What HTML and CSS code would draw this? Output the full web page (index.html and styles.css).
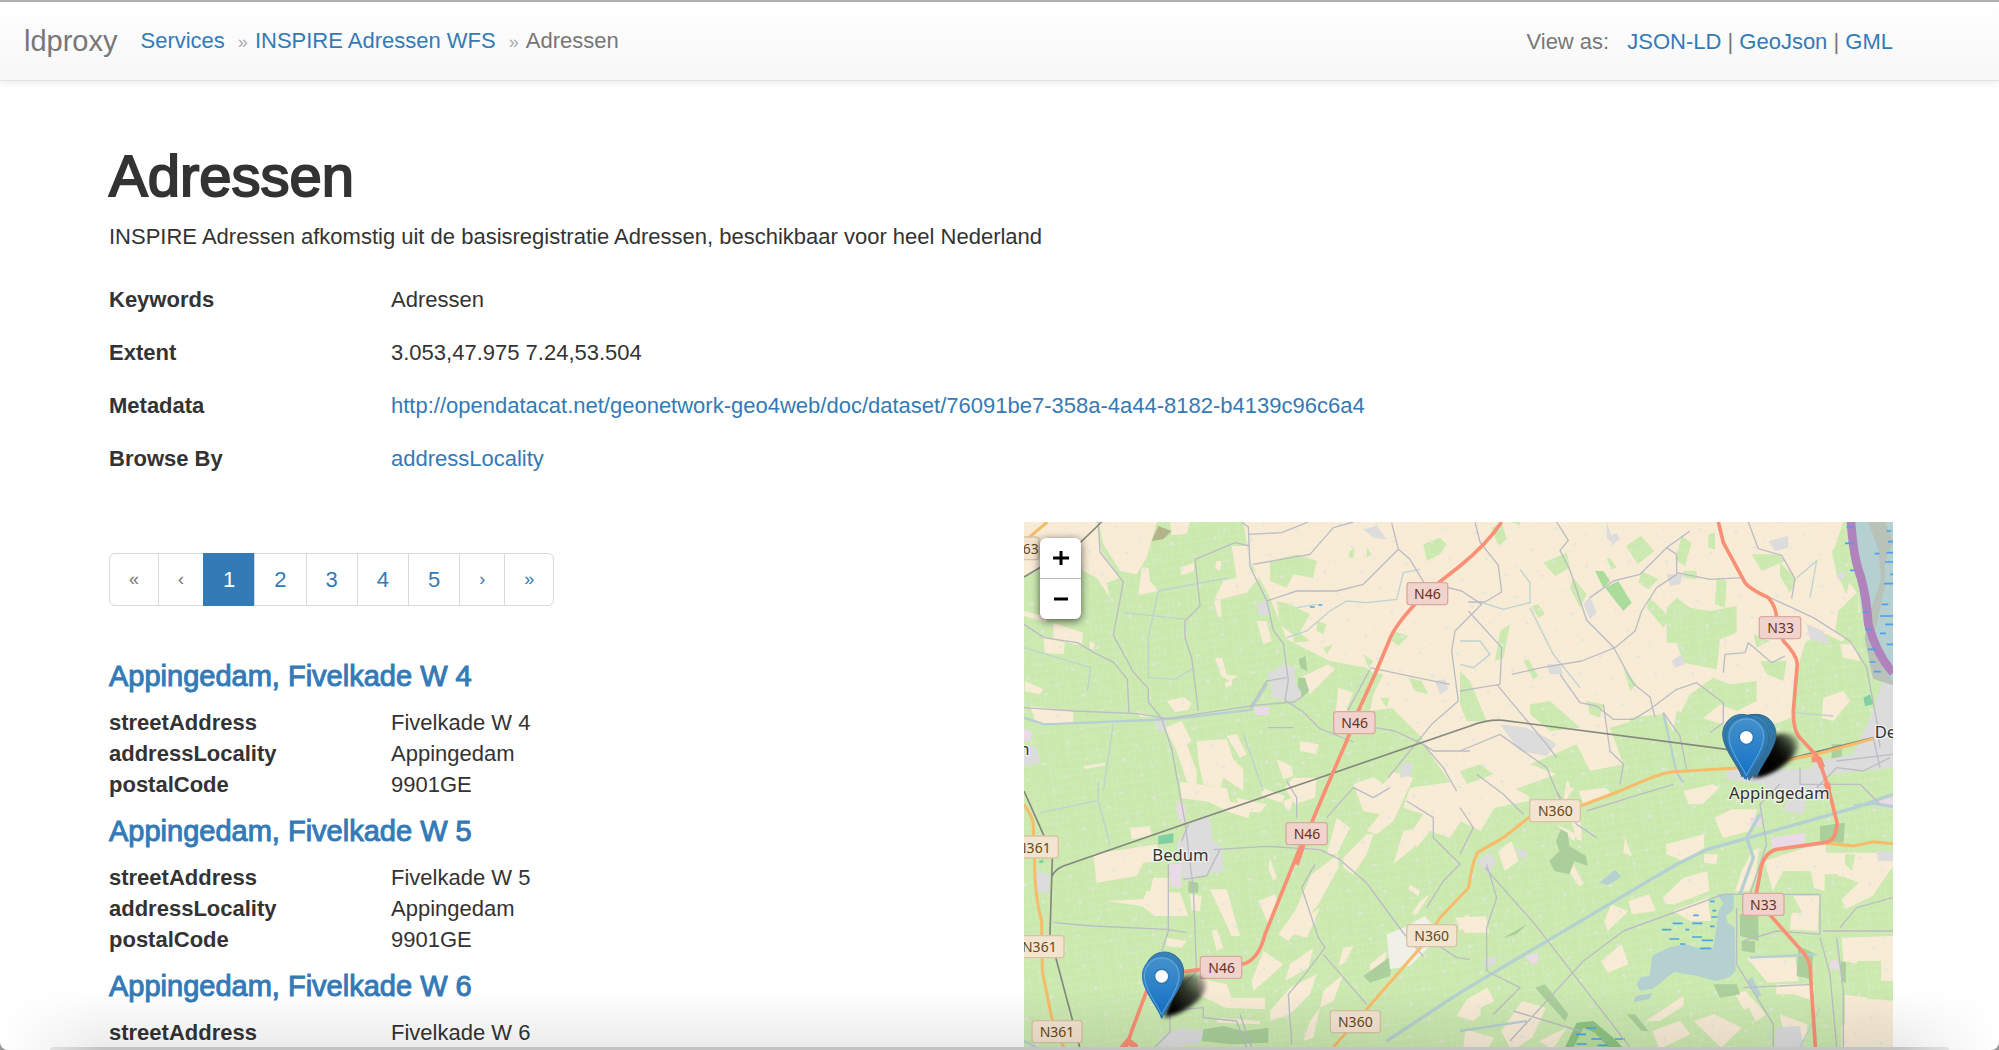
FILE: index.html
```html
<!DOCTYPE html>
<html lang="nl">
<head>
<meta charset="utf-8">
<title>Adressen - ldproxy</title>
<meta name="viewport" content="width=device-width, initial-scale=1">
<link rel="stylesheet" href="styles.css">
</head>
<body>
<div class="page">
<header class="navbar">
  <a class="brand" href="#">ldproxy</a>
  <nav aria-label="Breadcrumb">
    <ol class="breadcrumb">
      <li><a href="#">Services</a></li>
      <li><a href="#">INSPIRE Adressen WFS</a></li>
      <li>Adressen</li>
    </ol>
  </nav>
  <div class="formats"><span class="formats-label">View as:</span><a href="#">JSON-LD</a> | <a href="#">GeoJson</a> | <a href="#">GML</a></div>
</header>
<main class="container">
  <h1>Adressen</h1>
  <p class="lead">INSPIRE Adressen afkomstig uit de basisregistratie Adressen, beschikbaar voor heel Nederland</p>
  <dl class="meta">
    <dt>Keywords</dt><dd>Adressen</dd>
    <dt>Extent</dt><dd>3.053,47.975 7.24,53.504</dd>
    <dt>Metadata</dt><dd><a href="#">http://opendatacat.net/geonetwork-geo4web/doc/dataset/76091be7-358a-4a44-8182-b4139c96c6a4</a></dd>
    <dt>Browse By</dt><dd><a href="#">addressLocality</a></dd>
  </dl>
  <div class="columns">
    <section class="results">
      <ul class="pagination">
        <li><span class="arrow">«</span></li>
        <li><span class="arrow">‹</span></li>
        <li><a class="active" href="#" aria-current="page">1</a></li>
        <li><a href="#">2</a></li>
        <li><a href="#">3</a></li>
        <li><a href="#">4</a></li>
        <li><a href="#">5</a></li>
        <li><a class="arrow" href="#">›</a></li>
        <li><a class="arrow" href="#">»</a></li>
      </ul>
      <article class="item">
        <h3><a href="#">Appingedam, Fivelkade W 4</a></h3>
        <dl><dt>streetAddress</dt><dd>Fivelkade W 4</dd><dt>addressLocality</dt><dd>Appingedam</dd><dt>postalCode</dt><dd>9901GE</dd></dl>
      </article>
      <article class="item">
        <h3><a href="#">Appingedam, Fivelkade W 5</a></h3>
        <dl><dt>streetAddress</dt><dd>Fivelkade W 5</dd><dt>addressLocality</dt><dd>Appingedam</dd><dt>postalCode</dt><dd>9901GE</dd></dl>
      </article>
      <article class="item">
        <h3><a href="#">Appingedam, Fivelkade W 6</a></h3>
        <dl><dt>streetAddress</dt><dd>Fivelkade W 6</dd></dl>
      </article>
    </section>
    <section class="map" aria-label="Map">
      <svg class="map-canvas" viewBox="42 33 2607 1587" preserveAspectRatio="xMinYMin slice" role="img" aria-label="Map of Appingedam and Bedum">
        <defs>
          <pattern id="fields" width="60" height="46" patternUnits="userSpaceOnUse" patternTransform="rotate(-8)">
            <path d="M0 8H60M12 0V46M0 30H60M42 8V46M27 0V30" fill="none" stroke="#dcefc9" stroke-width="1.5"/>
          </pattern>
          <pattern id="specks" width="173" height="149" patternUnits="userSpaceOnUse" patternTransform="rotate(17)">
            <path d="M20 15l8-3 3 7-8 3zM90 42l6 2-2 8-7-2zM140 100l9-4 3 6-9 4zM45 112l7 1-1 6-7-1zM112 8l5 3-3 5-5-3z" fill="#e3e6dc"/>
          </pattern>
          <linearGradient id="pin-fill" x1="0" y1="0" x2="0" y2="1">
            <stop offset="0" stop-color="#4592cb"/><stop offset="1" stop-color="#126fc6"/>
          </linearGradient>
          <linearGradient id="pin-edge" x1="0" y1="0" x2="0" y2="1">
            <stop offset="0" stop-color="#3883b7"/><stop offset="1" stop-color="#2e6c97"/>
          </linearGradient>
          <linearGradient id="shade" x1="0" y1="1" x2="1" y2="0">
            <stop offset=".2" stop-color="#000"/><stop offset=".6" stop-color="#000" stop-opacity=".75"/><stop offset="1" stop-color="#000" stop-opacity=".15"/>
          </linearGradient>
          <filter id="soft" x="-50%" y="-50%" width="200%" height="200%"><feGaussianBlur stdDeviation="7"/></filter>
          <g id="pin-back"><path d="M0 0C-8-30-58-85-58-128A58 60 0 0 1 58-128C58-85 8-30 0 0Z" fill="url(#pin-edge)" stroke="#2e6c97" stroke-width="3"/></g>
          <g id="pin">
            <path d="M0 0C-8-30-58-85-58-128A58 60 0 0 1 58-128C58-85 8-30 0 0Z" fill="url(#pin-fill)" stroke="#2e7ab8" stroke-width="3"/>
            <path d="M0-12C-10-38-52-88-52-128A52 54 0 0 1 52-128C52-88 10-38 0-12Z" fill="none" stroke="#69a9d9" stroke-width="3"/>
            <circle cy="-127" r="21" fill="#fff" stroke="#2d75ad" stroke-width="4"/>
          </g>
          <path id="pin-shadow" d="M0 0L35-110Q75-145 115-122Q140-90 100-50Q60-12 0 0Z" fill="url(#shade)" filter="url(#soft)"/>
        </defs>

        <rect x="42" y="33" width="2607" height="1587" fill="#cbe9af"/>

        <!-- farmland -->
        <g fill="#faebd7">
          <path d="M700 33H2500L2470 120 2490 180 2545 250 2550 300 2500 390 2385 395 2350 520 2345 620 2260 650 2240 700 2140 640 2000 600 1985 690 1900 620 1800 650 1840 760 1740 780 1700 700 1560 760 1640 790 1500 840 1420 900 1340 840 1240 700 1170 690 1120 650 1150 590 1080 600 1100 500 1070 470 960 450 830 385 780 260 720 150Z"/>
          <path d="M42 33H260L275 120 330 200 290 215 300 260 260 200 220 180 200 120 42 200ZM265 33H440L410 140 380 190 330 180 280 100ZM480 33l60 0-10 35-45 5zM395 170l20 0 5 40 25 30-60 12zM510 170l42-15 0 25-38 12zM665 105l45 0 15 70 25 20-40 50-60 15-40 10 30-60 40-10zM620 150l15 0-5 30-15-10zM610 265l15 55 10-5-5-50zM740 330l30 0 15 60-25 10zM42 300l60 15 10 20-70-20zM130 335l90 30-5 40-85-22zM100 380l65 15-5 35-55-5zM45 510l55 25-10 15-45-10zM60 585l130 15 0 40-110 0zM240 390l15 8-5 20-12-8zM615 440l22 0 12 50 35 5-25 15-25-15zM645 515l20-8 2 15-20 8zM470 570l50-12 25 18-10 20-40 8zM380 602l55 15-45 0z"/>
          <path d="M465 650l50-20 30 60-15 10 30 80 0 60-30-30-30-90zM560 690l90-5 20 60 30 30 0 65-60-40-10 30-50-10-15-70zM650 675l30-5 30 60-20 10zM870 690l55 10-5 30-50-10zM800 745l45 20 5 30-30 10zM985 530l45 15-30 90-25-10zM870 500l85-40 20 15-75 75zM850 800l70 0-5 60-60 20-30-50zM220 765l65-10 0 8-60 12z"/>
          <path d="M510 812l140 20 10 40 65 10-10 40-60-20-60-30-80-10zM680 860l90 20-20 25-60-5zM755 830l70 25-10 20-60-20zM360 950l60-5 5 30-60 10zM250 1030l190-30 20 50-60 5-20 40-120 20zM290 1170l110-5 10-25 100 5 25 70-100 0-40-30zM430 1100l50 0-5 60-55-20zM540 1150l35 5-5 45-25-2zM600 1135l50 0 40 140-25 0zM470 1280l60 10-15 20-45-5zM605 1260l15-5 20 55-20 10zM780 1040l20 60-10 10-15-40zM745 1170l50-20 10 30-30 60zM855 1200l50-110 80-60 0 40-60 110-90 110-30-20zM1000 1040l70-70 20 0-20 60-40 60-30-20zM820 870l30-10-10 40-15-10zM1030 820l110-40 70 20-60 130-50 40-30-10 40-50-50-10zM980 920l40 30-40 80-30 0z"/>
          <path d="M1200 830l150-20 30 80-60 90-60-20-40 50-20-40 40-60-60-20zM1180 960l60-10-30 60-60 50zM1200 1120l30 20-5 15-30-20zM1230 1170l30-20-40 60-15 0zM1340 1230l35-20 5 20-30 30zM840 1360l70-50-15 60-70 40zM760 1320l60 40-90 80-5-30zM780 1500l60-70 80-40-20 60-60 60-60 20zM560 1400l90 20 15 40 100 0 0 35-120-5-80-40zM1000 1310l30-5-25 50-20 10zM1080 1360l50-40-10 50-40 20zM900 1530l30-40-20 90-30 10zM620 1520l130 10 0 10-130-5zM850 1270l20-40 60-40-40 90zM940 1440l60-50-30 80-40 20z"/>
        </g>
        <g fill="#faebd7" transform="translate(1350 810) scale(1.0313 1)">
          <path d="M0 0H120L200 45 200 60 100 80 60 150 0 120ZM310 0l30 10-40 60zM320 110l30 0 5 70-15-5zM110 210l40-30 20 60-40 30zM280 130l60 30-10 20zM345 30l80-10 15 20-80 30zM650 30l85-20 20 10-50 50-40 0zM480 170l20 55-25-10zM600 190l110-30 0 40-60 40-50-20zM740 110l50-25 75 0-20 65-80 20zM710 220l40 0-5 30-35-5zM590 350l60-60 70-20 5 60-100 40-25 0zM720 350l10 70-60 0-50-30zM490 360l60-20 20 50-70 10zM800 330l20-60 30-60 20-10-10 80-20 50zM885 240l180-60-5 150-30-10-10-50-80 0-30 60zM1060 215l200 0 0 40-60 90-80 40-10-30 50-50-50-20-60 0zM970 345l75 0-5 105-80-5 5-50 30 0zM835 530l140 0 10 70-90 5zM920 610l110 0 0 50-60-20-50 0zM1110 470l150-5 0 160-60 0-10-70-75-15zM1110 640l150 20 0 145-150 0zM410 540l60-50 20 60-60 25zM540 720l110-75 0 30-70 45zM560 750l80-30 30 40-90 45zM680 720l60-20 80 40-60 60zM800 640l30-10 60 70-40 30zM180 660l70 20-40 90-60 40-30-60zM20 655l60-35 20 40-60 60-50-15zM15 745l85 25-20 35-70 0zM330 250l30 60-15 5-25-40zM-15 410l90-5 10 50-70 0zM230 780l80-40-40 65zM440 370l50 20-60 60-10-30zM930 700l80 30 0 40-60 30z"/>
        </g>

        <!-- meadows on top of farmland -->
        <g fill="#cbe9af">
          <path d="M780 150l80-20 60 20-10 50-60-10-20 40-50-20zM800 270l40 10 60 30-40 70-50-40zM850 350l50 40-50 5zM1020 120l15-10-5 30-15 0zM1070 110l15 20-15 10zM1240 100l50-20 20 20-20 30-40 20zM1150 360l45 15-30 30-25-20zM1060 430l30 20-15 20zM920 330l30 10-10 30-20-10zM940 410l30-10-20 30zM1060 480l60 10-40 80-30 80-40-60zM1090 600l60-5 90 90-60 40-90-10zM1060 690l80 20 20 60-40 50-80-60zM1110 560l30 0-10 30zM1195 500l40 10 20 40-40-10z"/>
          <path d="M1445 50l30-15 15 50-25 20zM1500 33l30 0 0 10zM1600 155l70-30 10 45-45 25zM1848 105l45-30 40 45-50 40zM2015 75l30 20-20 70-30-20zM2095 70l20-5 0 50-20-5zM1790 145l10-5 20 30-15 5zM1895 180l50 25-30 30-30-20zM1690 200l40 50-20 40-30-60zM1920 260l60 60-20 30-50-60zM1970 290l30-30 40 30 60 10 80-15 0 80-50 20-10 90-100-20-20-60-30 0zM2225 130l80 0 20 20-70 30zM2310 155l50 50-20 40-30-50zM2465 120l35-30 20 110-10 50-30-60zM2485 300l60-60 0 110-20 40-50-30zM2120 200l30 10-5 80-30-10zM2020 180l40 0 0 25-40-5zM1470 360l30-20-20 100-25 10zM1540 450l15-5 30 50-15 10zM1565 285l20-5 20 30-20 10zM1560 580l60-10 90 80-90 10-60-50zM2110 500l50 20 80-10 0 60-60 30-50-20-60 50-60-20 30-60zM2250 450l80 0-10 60-50-20zM1730 570l50 10-10 40-30-10zM1840 470l40 50-20 20zM2230 370l50 20-40 20z"/>
          <path d="M1350 480l30 30 50 120-60 0-20-50zM1860 620l100-10 40 70-50 60-100 0zM1980 720l80-20 70 30-30 40-120-10zM1660 720l60 30 50 80-90 0zM1350 780l60-20 40 30-80 30zM2390 390l60-20 60 30 40 60 50 100-30 100-20 90-90 30-90-80-10-60 30-140z"/>
        </g>
        <path d="M2440 560l60-20 20 30-50 60-35-10zM2490 400l40 0 20 50-50-10z" fill="#faebd7"/>
        <g fill="#cbe9af" transform="translate(1350 810) scale(1.0313 1)">
          <path d="M945 280l75 0 0 50-75 10zM1060 280l40 0 0 70-30-10zM1155 540l70 0 0 60-70 0zM1185 600l75 0 0 55-75 0zM1090 620l30 10 0 100-30 10zM800 700l40-20 20 40-40 25zM60 680l40-20 10 30-50 40zM1120 220l30 0-10 50-20-20zM650 700l30-10 0 30z"/>
        </g>
        <rect x="42" y="33" width="2607" height="1587" fill="url(#fields)" opacity=".6"/>
        <rect x="42" y="33" width="2607" height="1587" fill="url(#specks)"/>

        <!-- woods -->
        <g fill="#aacf9b">
          <path d="M865 445l22-10 5 45-20-10zM865 500l20 0 12 40-20 18-15-20z"/>
          <path d="M1755 180l25 0 20 30-20 20zM1785 230l40-20 40 65-25 25z" fill="#aadd9c"/>
          <path d="M425 90l20-45 40 15-25 25z" fill="#b4b48c"/>
          <path d="M1653 955l20 10 5 40 50 30 5 30-40-15-15 40-45-10-15-30 30-30-10-30zM2190 1210h55l0 80-55-15zM2430 945l75-10-5 60-70-5zM2365 1305l45 20-5 80-45-10zM1575 1430l30-10 70 90-10 20zM2493 1350l15 5 0 60-15-5zM580 1555l60-10 60 15 75-10 0 45-110 5-90-10zM1060 1395l70-50 20-10-10 60-60 20zM2465 700l30 0 0 40-30 5zM535 1110l30 5 0 30-30 0zM1850 1510l25 0 40 50-20 0zM2110 1420l70 0 10 30-60 10zM1480 1280l70-40-30 30zM2195 1290l40 0 0 35-40-5z"/>
          <path d="M1660 1620l40-85 50-5 60 50 40 40z" fill="#8fc584"/><path d="M1685 1620l35-70 35 15 50 55z" fill="#b9dfa0"/>
          <path d="M445 975l45-8 0 28-45 5zM88 1050l12-5 0 10-12 2zM2560 560l20-10 10 30-25 5z" fill="#7fcfa3"/>
        </g>

        <!-- built-up land -->
        <g fill="#dcdcdc">
          <path d="M770 490l50-30 35 10 0 45 20 30-10 25-40-5-40-5 0-40zM740 275l30-5 10 40-35 5zM430 620l35-5 5 40-20 10zM42 705l35 0 15 50-50 10zM1275 510l30-5 10 30-25 15zM1175 755l35 0-10 40-30 5zM1060 55l40-10 30 40-40-5zM500 1000l40-60 25-20 35 0 10 70 25 20 5 70-50 10-60 20-20-40zM80 1080l40 10-5 60-35-10zM450 1580l60-30 70 10-10 40-120 10zM1470 640l80 10 60 30 30 20-30 35-80-15zM1720 280l20-25 20 50-20 20zM1970 190l50 0-10 30-30 5zM1985 450l30-20 10 30-30 10zM2275 90l60-15 0 35-40 10zM2390 340l50 20 20 40-60-15zM1610 460l40 0 10 30-40 0zM2480 190l25-10 0 25-20 0zM1790 35l15 40-15 5zM1790 80l30-15 10 20-20 15zM2580 620l40-110 29-10v270l-200 20-20 50-80-30 80-60 100-20zM2150 775l300 0 10 90-140-5-60-40-110-15zM2330 870l60-10-10 50-60-10zM2295 1550l75-5 10 65-85 0zM1400 1050l40-25 20 30-30 30zM1420 1345l40-10-5 30-30 5zM2600 1020l49 0 0 30-45 0zM1520 1010l30 10 0 30-30-20z"/>
          <path d="M1130 1270l50-20 65-35 25 30 10 40-80 80-60 10z" fill="#f0efe8"/>
          <path d="M735 588l42 0 0 25-42 0zM478 1060l36 0 0 70-30 0zM500 870l25 10 0 60-20-20zM42 655l25 5-5 30-20 0zM2285 980l100-15 0 40-100 15zM2220 920l35-5 0 30-30 0zM1545 1335l40-10 0 30-20 5zM2590 870l59-10 0 35-59-10zM2460 1350l20-5 10 30-30 0z" fill="#ead9e6"/>
        </g>

        <!-- water -->
        <path d="M2510 33H2649V520L2610 500 2560 330 2540 180Z" fill="#b5d0d0"/>
        <path d="M2575 33h50l24 60-25 60 0 80-20 90-20 80 30 60 35 50v10l-60-20-25-120 10-60 40-120-10-90z" fill="#b8c2b8"/>
        <path d="M2523 33Q2530 140 2553 200 2570 260 2575 340 2600 430 2649 486" fill="none" stroke="#b083bd" stroke-width="26"/>
        <path d="M2510 49h20M2505 97h26M2520 178h14M2558 303h18M2565 355h16M2574 415h24M2578 453h18M2592 482h20M2594 128h14M2630 125h19M2622 218h27M2615 280h20M2610 315h39M2610 367h18M2630 400h19M2634 92h15M2625 340h24M2630 60h14M2625 153h24M2640 190h9" stroke="#4a9ff0" stroke-width="5"/>
        <g fill="#b5d0d0" transform="translate(1350 810) scale(1.0313 1)">
          <path d="M748 340l48-5 0 50-22 20 5 20 20 15 3 130-20 20-40 10-50-15-70-12-60 50-38 6-10-20 12-20 25-5 8-60 50-25 45-10 50 15 32-2 10-60 5-50 15-25zM405 305l45-38 20 20-40 25zM510 645l50-8-10 18-45 8zM835 600l15-12 27 55-12 8z"/>
        </g>
        <path d="M1130 1590L1350 1445 1628 1280 2000 1060 2093 1015 2536 890 2649 850M2250 910l-40 70 20 60-40 110M2530 885l60-8 59 10" fill="none" stroke="#b5d0d0" stroke-width="10"/>
        <path d="M42 620l60 20 130-5 190-8 80-5 220-25 50-80M42 1590l40 20M1960 605l40 180 20 30M2420 1330l-200 10M1350 1560l200-30" fill="none" stroke="#b5cfd2" stroke-width="7"/>
        <path d="M2100 1171h14M2107 1199h12M2104 1218h18M2100 1246h14M2050 1213h16M1988 1237h30M2047 1237h30M1956 1256h28M2026 1256h12M2046 1278h30M2075 1288h34M1978 1284h30M2010 1299h16M2070 1312h34M1728 1551h30M1698 1570h30M1744 1584h30M1700 1599h30M1763 1603h30M1815 1584h30M900 288h14M925 282h12" stroke="#4aa5e8" stroke-width="5"/>

        <!-- streams -->
        <g fill="none" stroke="#bdd3cf" stroke-width="4">
          <path d="M445 240l-30 140 0 120M340 305l190 20M445 240l210-40M860 290l60-10M960 300l-70 60-60 20M1530 175l30 40 0 60-80 20-80-25M1560 290l70 140 80 100M300 1000l-35-130 0-60M42 410l200 60-10 70M310 640l-30 200M415 500l80 5 50-30M700 670l60 170M90 905l170-35M1350 390l60 0 30 40-50 40-40-10M2360 200l60-50-20 110M2350 605l120 10M2370 1610l60-120M960 300l50-30 60 5 90-10 20-80 50-10"/>
        </g>

        <!-- local roads -->
        <g fill="none" stroke="#bcbcc4" stroke-width="4" stroke-linejoin="round">
          <path d="M265 33l5 90 70 90-30 160 60 110 45 50 0 40 40 50 30 90 40 220 25 200 10 250-60 60-20 60 0 60-50 50M695 33l20 15 5 120 50 100 20 90 30 40 15 110-10 60 55 35 50 50 100 40"/>
          <path d="M42 590l150 10 190 8 90 15 260-40 120-10 30-20M770 270l90-30 120 0 80-20 105-105-20-80M1165 115l35 30 45 75 50 5 60 15 60 40-80 80-10 60 20 150-80 70-90 110-40 50"/>
          <path d="M42 340l60 40 100 15 50 30 60 30 40 50 5 100M555 145l15 140-45 45 0 50 20 60 20 160M555 145l120-50 45 10M730 160l170-30 70-80 60-17M715 70l100-5 80-32M720 590l50-80 60-10M775 650l75 0M1080 470l140 30 100 20M1080 475l-70 130M1095 650l60 10 85 40 30 20 110 0M1240 700l60 70 40 70"/>
          <path d="M1395 33l15 60 55 70 10 80-50 30-50 0M1640 33l35 55-25 30 30 60 40 120 10 30 80 80 60 110 50 40 15 60M1740 260l70-50 80-20 80-80 70-50M1970 110l30 20 0 60-60 40-45 70-20 60-60 50-100 40-120 20-90 20M2000 185l100 20 100-5M1375 300l100 110-5 110-60 10-60 10M1460 520l150 180 30 40M1650 490l60 85 50 10 50 40 60 0 50-30 80-60 60-20 80 60 0 60-40 30"/>
          <path d="M2215 33l30 80 70 20 40 70-10 60M2280 260l130 60 110 70 50 80 30 160 10 80M2140 485l5-55 60-5 10-30 70 60 40-20M1960 605l50 70 20 100M1780 580l20 140 40 40-10 60"/>
          <path d="M1350 720l120-50 140 100 50 120M610 1016l160-10 160 10 60 30 80 70 110 150 60 70M130 1235l120 10 220 10 60 10M475 1060l0 200-20 60M515 990l20-50M520 1105l70-10 40-80M690 1510l60 170M460 1500l120-10 0 30 100 10 30 80M915 1060l-40 70 50 150 20 30-60 80-50 60 10 150M940 1330l130 150M1280 1300l60 40 40 5M950 920l80-90 60 30 50-30M1190 870l80 50 0 60 80 80-50 50-50 80M830 810l30 50 0 60"/>
          <path d="M1425 1070l150 170 340 440M1350 1030l40-80-40-60M1540 910l-60-60-80-60M1640 840l60 100 60 40M1430 1060l30 100-30 90 0 130 100 50-80 80M1500 1590l220-240 120-90 300-110 290 0 0 120M2180 1190l0 170 110 180 0 70M1730 900l160-50 100-30M2270 1000l-20-120 60-60M2270 1000l-50 150M2440 1260l210 0M2200 1290l100-30 130 10M2430 1280l30 110 20 220M2480 1280l20 160 0 170M2200 1430l210-10M1510 1500l200 60M2490 1250l50-60 109-30"/>
          <path d="M2370 770l0 50 180 0 60 60M2420 830l60-60 80 10 80-40M2480 750l170-20M2590 680l20 90"/>
        </g>

        <!-- railways -->
        <path d="M42 840L100 970 127 1040 120 1270 140 1350 212 1620M127 1095Q132 1078 160 1065L535 935 900 810 1380 645Q1430 625 1480 628L2150 715 2330 745 2590 680M42 198L200 105 275 33" fill="none" stroke="#85887f" stroke-width="5"/>

        <!-- secondary roads -->
        <path d="M2590 683L2425 728 2330 748 2170 772 1990 782Q1950 785 1830 840L1711 885 1600 910 1556 920 1480 980 1402 1025Q1385 1060 1376 1130L1290 1220 1240 1300 1070 1495 960 1620M42 880Q70 920 70 945L75 1100Q80 1180 95 1230L97 1380 125 1520 165 1620M50 85L112 33M2440 995L2530 1005 2590 992 2649 998" fill="none" stroke="#f7bb6a" stroke-width="9"/>

        <!-- primary roads -->
        <g fill="none" stroke="#f98f75" stroke-width="11" stroke-linejoin="round">
          <path d="M1475 33Q1430 100 1350 165L1290 212 1210 285Q1150 350 1135 395L1095 490 1045 600 1010 690 945 840 905 935 870 1010 765 1270Q745 1350 695 1360L520 1382 410 1440 365 1560 345 1620"/>
          <path d="M2125 33L2140 95 2205 215Q2220 235 2275 260 2300 290 2300 325L2320 390Q2360 430 2362 460L2350 600Q2350 660 2370 680L2425 740 2455 830 2481 935Q2480 990 2443 995L2299 1015Q2255 1030 2250 1090L2239 1145 2283 1215 2380 1325Q2404 1350 2402 1400L2417 1620"/>
          <path d="M878 1000L858 1060M2450 815L2456 838M2405 745h22l10 25M330 1620l25-30 25 20" stroke-width="18"/>
        </g>

        <!-- road shields and place names -->
        <g class="shield primary">
          <rect x="1191" y="215" width="122" height="66" rx="8"/><text x="1252" y="265">N46</text>
          <rect x="971" y="602" width="124" height="66" rx="8"/><text x="1034" y="652">N46</text>
          <rect x="828" y="935" width="124" height="66" rx="8"/><text x="891" y="985">N46</text>
          <rect x="571" y="1336" width="124" height="66" rx="8"/><text x="635" y="1386">N46</text>
          <rect x="2248" y="317" width="124" height="66" rx="8"/><text x="2312" y="367">N33</text>
          <rect x="2198" y="1147" width="124" height="66" rx="8"/><text x="2260" y="1197">N33</text>
        </g>
        <g class="shield secondary">
          <rect x="-10" y="78" width="97" height="68" rx="8"/><text x="62" y="129">63</text>
          <rect x="0" y="975" width="145" height="66" rx="8"/><text x="70" y="1025">N361</text>
          <rect x="12" y="1274" width="150" height="66" rx="8"/><text x="88" y="1324">N361</text>
          <rect x="66" y="1529" width="150" height="66" rx="8"/><text x="141" y="1579">N361</text>
          <rect x="1190" y="1241" width="150" height="66" rx="8"/><text x="1265" y="1291">N360</text>
          <rect x="961" y="1499" width="150" height="66" rx="8"/><text x="1036" y="1549">N360</text>
          <rect x="1559" y="866" width="152" height="66" rx="8"/><text x="1636" y="916">N360</text>
        </g>
        <g class="place">
          <text x="427" y="1049">Bedum</text>
          <text x="2157" y="864">Appingedam</text>
          <text x="2594" y="680">De</text>
          <text x="28" y="732">n</text>
        </g>

        <!-- address markers -->
        <use href="#pin-shadow" x="462" y="1520"/>
        <use href="#pin-back" x="463" y="1511"/>
        <use href="#pin" x="455" y="1523"/>
        <use href="#pin-shadow" x="2225" y="802"/>
        <use href="#pin-shadow" x="2240" y="798"/>
        <use href="#pin-back" x="2240" y="798"/>
        <use href="#pin-back" x="2232" y="798"/>
        <use href="#pin-back" x="2224" y="800"/>
        <use href="#pin-back" x="2196" y="798"/>
        <use href="#pin-back" x="2204" y="804"/>
        <use href="#pin-back" x="2218" y="808"/>
        <use href="#pin" x="2209" y="806"/>
      </svg>
      <div class="zoom">
        <button type="button" aria-label="Zoom in"><svg viewBox="0 0 16 16" aria-hidden="true"><path d="M8 1V15M0 8H16"/></svg></button>
        <button type="button" aria-label="Zoom out"><svg viewBox="0 0 16 16" aria-hidden="true"><path d="M1 8H15"/></svg></button>
      </div>
    </section>
  </div>
</main>
<div class="window-shade"></div>
</div>
</body>
</html>
```
FILE: styles.css
```css
* { box-sizing: border-box; }

html { background: #999; }

body {
  margin: 0;
  font: 22px/31px "Helvetica Neue", Helvetica, "Liberation Sans", Arial, sans-serif;
  color: #333;
}

.page {
  position: relative;
  height: 100vh;
  overflow: hidden;
  background: #fff;
  border-bottom-left-radius: 8px;
  border-bottom-right-radius: 8px;
}

a { color: #337ab7; text-decoration: none; }
ul, ol, dl, dd, p, h1, h3 { margin: 0; padding: 0; }
ul, ol { list-style: none; }

.navbar {
  display: flex;
  align-items: center;
  height: 81px;
  padding: 0 106px 0 24px;
  border-top: 2px solid #b0b0b0;
  border-bottom: 1px solid #e2e2e2;
  background: linear-gradient(#fff, #f7f7f7);
  box-shadow: 0 2px 8px rgba(0, 0, 0, .08);
  color: #777;
}

.brand { margin-right: 23px; font-size: 29px; color: #777; }

.breadcrumb { display: flex; }

.breadcrumb li + li::before {
  content: "»";
  margin: 0 7px 0 13px;
  font-size: 18px;
  color: #aaa;
}

.formats { margin-left: auto; }
.formats-label { margin-right: 18px; }

.container { padding: 64px 106px 0 109px; }

h1 {
  font-size: 58px;
  line-height: 62px;
  font-weight: 400;
  -webkit-text-stroke: 2px;
}

.lead { margin-top: 14px; }

.meta {
  display: grid;
  grid-template-columns: 282px 1fr;
  row-gap: 22px;
  margin-top: 32px;
}

dt { font-weight: 700; }

.columns {
  display: grid;
  grid-template-columns: minmax(0, 915fr) minmax(0, 869fr);
  margin-top: 48px;
}

.pagination { display: flex; margin-top: 31px; }

.pagination a,
.pagination span {
  display: block;
  margin-left: -1px;
  padding: 10px 19px;
  border: 1px solid #d8d8d8;
  background: #fff;
}

.pagination .arrow { font-size: 18px; }
.pagination span { color: #777; }
.pagination li:first-child span { margin-left: 0; border-radius: 6px 0 0 6px; }
.pagination li:last-child a { border-radius: 0 6px 6px 0; }

.pagination a.active {
  border-color: #337ab7;
  background: #337ab7;
  color: #fff;
}

.item { margin-top: 14px; }
.pagination + .item { margin-top: 53px; }

.item h3 {
  font-size: 29px;
  line-height: 34px;
  font-weight: 400;
  -webkit-text-stroke: 1px;
}

.item dl {
  display: grid;
  grid-template-columns: 282px 1fr;
  margin-top: 14px;
}

.map {
  position: relative;
  height: 529px;
  overflow: hidden;
}

.map-canvas { display: block; width: 100%; height: 100%; }

.shield rect { stroke-width: 4; }
.shield text { font: 42px "Noto Sans", "DejaVu Sans", sans-serif; text-anchor: middle; }
.primary rect { fill: #f0d3cc; stroke: #dca99e; }
.primary text { fill: #6b3027; }
.secondary rect { fill: #f3e4d0; stroke: #d8c4a2; }
.secondary text { fill: #66481c; }

.place text {
  font: 50px "Noto Sans", "DejaVu Sans", sans-serif;
  fill: #333;
  stroke: rgba(255, 255, 255, .6);
  stroke-width: 8px;
  paint-order: stroke;
}

.zoom {
  position: absolute;
  top: 16px;
  left: 16px;
  width: 41px;
  border-radius: 6px;
  background: #fff;
  box-shadow: 0 2px 8px rgba(0, 0, 0, .65);
}

.zoom button {
  display: flex;
  align-items: center;
  justify-content: center;
  width: 100%;
  height: 40px;
  padding: 0;
  border: 0;
  background: none;
}

.zoom button + button { height: 41px; border-top: 1px solid #bbb; }
.zoom svg { width: 16px; height: 16px; }
.zoom path { stroke: #000; stroke-width: 3; }

.window-shade {
  position: absolute;
  inset: auto 0 0;
  height: 60px;
  background: linear-gradient(transparent, rgba(0, 0, 0, .08));
  -webkit-mask-image: linear-gradient(90deg, transparent, #000 100px, #000 calc(100% - 100px), transparent);
  mask-image: linear-gradient(90deg, transparent, #000 100px, #000 calc(100% - 100px), transparent);
}

.window-shade::after {
  content: "";
  position: absolute;
  inset: auto 50px 0;
  height: 3px;
  border-radius: 3px 3px 0 0;
  background: #c4c4c4;
}
```
